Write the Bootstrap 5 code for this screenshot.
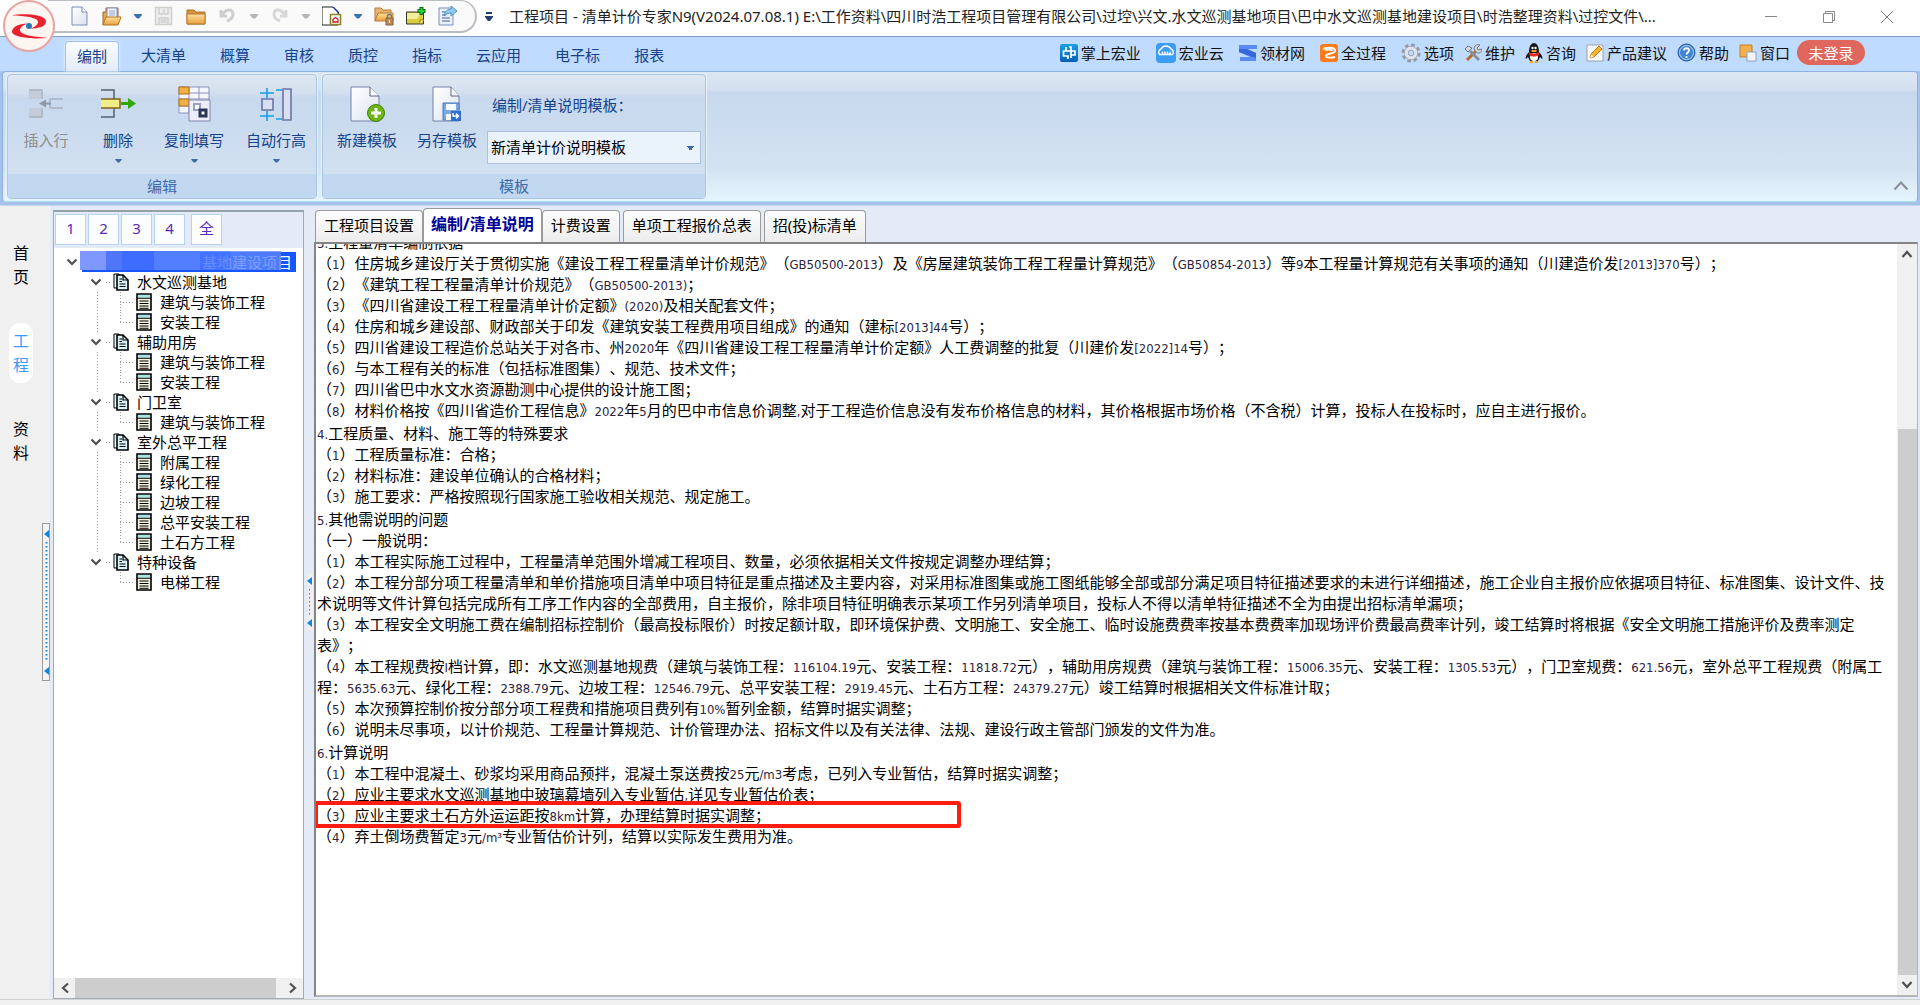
<!DOCTYPE html>
<html lang="zh-CN">
<head>
<meta charset="utf-8">
<meta name="viewport" content="width=device-width, initial-scale=1">
<title>工程项目 - 清单计价专家N9</title>
<link href="https://cdn.jsdelivr.net/npm/bootstrap@5.3.0/dist/css/bootstrap.min.css" rel="stylesheet">
<style>
body{font-family:"Noto Sans","Noto Sans CJK SC",sans-serif;font-size:15px;line-height:20px;color:#000;background:#f0f0f0}
button{font:inherit;color:inherit;border:0;background:none;padding:0}
a{color:inherit;text-decoration:none}
svg{display:block;flex:none}
.titlebar{height:36px;background:#fff}
.logo-btn{width:54px;height:54px;left:2px;top:-1px;z-index:5}
.qat{height:33px;margin-left:48px;padding-left:22px;padding-right:17px;gap:12px;background:#fafafa;border:1px solid #b9bcc0;border-width:1px 2px 2px 0;border-radius:0 17px 17px 0}
.cap-text{color:#222;margin-left:16px;padding-top:6px}
.win-btn{width:58px;height:34px}
.tabstrip{background:#bfdbff;border-top:1px solid #7f9dc9;height:35px;color:#15428b;padding-left:60px;padding-right:55px}
.rtab{height:30px;padding:0 12px 2px;margin:0 5px;border-radius:4px 4px 0 0}
.rtab.on{background:linear-gradient(#fbfdff,#e3ecf8);border:1px solid #9fc0ec;border-bottom:0;padding:0 11px 2px;box-shadow:0 0 3px #fff}
.quick{color:#111;gap:15px;padding-top:3px}
.quick a{gap:3px}
.tools{gap:10px}
.login{width:68px;height:25px;border-radius:13px;background:#e0675d;color:#fff;margin-left:-3px}
.ribbon{height:131px;padding:2px 4px;margin:0 2px 0 2px;border:1px solid #8db2e3;border-radius:4px;background:linear-gradient(#dde7f3 0,#d4e0f0 14%,#c8d8ed 16%,#d3e3f2 75%,#e5f5ff 100%);color:#15428b;gap:5px;border-bottom-color:#a9e2ef}
.ribbon-wrap{background:#a6c2ea;padding-bottom:3px;border-bottom:1px solid #c5d8f2}
.rgroup{border:1px solid #a8c6e2;border-radius:4px;background:linear-gradient(#dfe8f3 0,#d3dfee 15%,#c8d8ee 19%,#d4e4f2 100%);box-shadow:0 0 0 1px #e8f2fb}
.rgroup .cap{height:24px;background:#c2d8f0;color:#3e6aaa}
.rbtn{padding-top:11px}
.rbtn .lbl{margin-top:8px}
.rbtn .tri{margin-top:9px}
.off{color:#8d8d8d}
.w1{width:76px}.w2{width:68px}.w3{width:84px}.w4{width:80px}
.combo{height:33px;border:1px solid #abc1de;border-radius:0;background-color:#eaf2fb;color:#000;font-size:15px;line-height:20px;padding:0 24px 2px 3px;width:214px;background-image:linear-gradient(#3e6aaa,#3e6aaa),linear-gradient(#3e6aaa,#3e6aaa),linear-gradient(#3e6aaa,#3e6aaa);background-size:7px 1px,5px 1px,3px 2px;background-position:right 6px top 14px,right 7px top 15px,right 8px top 16px;background-repeat:no-repeat}
.combo-label{padding-left:5px}
.rail{width:50px;padding-top:29px;gap:28px}
.rail a{width:24px;margin-left:9px;padding:6px 4px;font-size:16px;line-height:24px;border-radius:11px;text-align:center}
.rail a.on{background:#fff;color:#3b9bff}
.main{background:#e4ebf6}
.rail-col{background:#f0f0f0}
.gripper{width:8px;height:158px;border:1px solid #9a9a9a;background:#f4f4f4;top:317px;right:0}
.panel-tree{width:251px;margin:4px 0 0 3px;border:1px solid #a0abb4;border-top:2px solid #93a2a6;background:#fff}
.lvbar{background:#e4ebf6;height:36px;padding:2px 1px;gap:2px}
.lvbar button{width:31px;height:31px;border:1px solid #b5d3f5;background:#fbfdff;color:#5a28b4;padding-bottom:3px}
.tree,.tree ul{list-style:none;margin:0;padding:0}
.tree{padding:4px 0 0 12px}
.trow{height:20px;white-space:nowrap}
.rootbar{width:214px;height:20px;background:#1655ff;color:#fff;margin-left:4px}
.veil{left:-2px;top:-1px;width:201px;height:19px;background:linear-gradient(90deg,#7f98ff 0 26px,#5076f8 26px 42px,#3d6cff 42px 74px,#527fff 74px 120px,rgba(74,120,255,.85) 120px 150px,rgba(91,133,255,.8) 150px 201px)}
.leafs{margin-left:31px!important;padding-left:23px!important;background:repeating-linear-gradient(#9a9a9a 0 1px,#fff 1px 3px) left top/1px 100% no-repeat}
.leafs.end{background:none}
.elbow{width:14px;height:20px;margin-right:2px;background:repeating-linear-gradient(#9a9a9a 0 1px,transparent 1px 3px) left top/1px 100% no-repeat,repeating-linear-gradient(90deg,#9a9a9a 0 1px,transparent 1px 3px) left 10px/14px 1px no-repeat}
li:last-child>.trow>.elbow{background-size:1px 10px,14px 1px}
.stub{width:5px;height:1px;margin:0 2px 0 4px;background:repeating-linear-gradient(90deg,#9a9a9a 0 1px,transparent 1px 3px)}
.hbar{height:20px;background:#f0f0f0}
.hbar .thumb{background:#cdcdcd;margin-right:6px}
.arr{width:21px;height:20px}
.split{width:10px;padding-top:368px}
.dtabs{padding:4px 0 0 1px}
.dtabs button{height:32px;padding:0 8px 3px;border:1px solid #9b9b9b;border-bottom:0;border-radius:4px 4px 0 0;background:linear-gradient(#fdfdfd,#ececec);white-space:nowrap}
.dtabs button.on{height:34px;margin-top:-2px;background:#fff;color:#000096;font-weight:700;font-size:16px;padding:0 7px 4px}
.dtabs .gap-l{margin-left:3px}
.doc{border:2px solid #848484;border-right:1px solid #b5b5b5;border-bottom:2px solid #b5b5b5;background:#fff;margin-right:2px;margin-bottom:2px}
.paper{padding-left:1px;line-height:21px;font-family:"Noto Sans CJK SC",sans-serif;white-space:nowrap;text-spacing-trim:space-all}
.paper section{padding-bottom:2px}
.paper section:first-child{margin-top:-13px}
.paper p{margin:0}
.paper i{font:normal 13px/13px "DejaVu Sans Condensed","DejaVu Sans",sans-serif;font-stretch:condensed;color:#2c2440}
.frame-red{left:-3px;top:-3px;width:647px;height:27px;border:4px solid #ff1c10;border-radius:3px}
.vbar{width:20px;background:#f0f0f0}
.vbar .thumb{background:#cdcdcd;width:19px;flex:545}
.vbar .room{flex:165}
.foot{height:6px;border-top:1px solid #d2d2d2;background:#f0f0f0}
</style>
<script src="https://cdn.jsdelivr.net/npm/bootstrap@5.3.0/dist/js/bootstrap.bundle.min.js"></script>
</head>
<body class="d-flex flex-column vh-100 overflow-hidden">
<svg width="0" height="0" class="position-absolute" aria-hidden="true">
<defs>
<linearGradient id="gf" x1="0" y1="0" x2="0" y2="1"><stop offset="0" stop-color="#fde0a0"/><stop offset="1" stop-color="#e9a13c"/></linearGradient>
<linearGradient id="gd" x1="0" y1="0" x2="1" y2="1"><stop offset="0" stop-color="#fff"/><stop offset="1" stop-color="#dbe2ee"/></linearGradient>
<linearGradient id="gb" x1="0" y1="0" x2="0" y2="1"><stop offset="0" stop-color="#1aa0ea"/><stop offset="1" stop-color="#0560b8"/></linearGradient>
<symbol id="doc2" viewBox="0 0 16 18"><path d="M1 1h5v14H1z" fill="#dff" stroke="#000"/><path d="M4 2h6l5 5v10H4z" fill="#d8f3f8" stroke="#000" stroke-width="1.6"/><path d="M10 2v5h5M6.500 6h2.500M6.500 8.500h2.500M6.500 11h6M6.500 13.500h6" fill="none" stroke="#000" stroke-width="1.200"/></symbol>
<symbol id="sheet" viewBox="0 0 16 18"><path d="M1 1h14v16H1z" fill="#f4f3dc" stroke="#000" stroke-width="1.600"/><path d="M2 2h12v2.500H2z" fill="#a8e4f0"/><path d="M1 5.300h14M3.500 8h9M3.500 10.500h9M3.500 13h9M3.500 15.200h9" stroke="#000" stroke-width="1.100"/></symbol>
<symbol id="chev" viewBox="0 0 12 12"><path d="M1.500 3.500 6 8l4.500-4.500" fill="none" stroke="#505050" stroke-width="2.200"/></symbol>
<symbol id="tri" viewBox="0 0 8 5"><path d="M0 0h8v1L5 4.500H3L0 1z"/></symbol>
</defs></svg>

<header>
<div class="titlebar d-flex align-items-start position-relative">
  <button class="logo-btn position-absolute" aria-label="主菜单"><svg width="54" height="54" viewBox="0 0 54 54"><circle cx="27" cy="27" r="25" fill="#fff5f0" stroke="#e4a5a5" stroke-width="2"/><path d="M10 16.500c6-2 33-2 34 5.500 0 6-7 7-17 8 5-1.500 9-4 9-7 0-5-14-6-26-6.500z" fill="#e8232f"/><path d="M45 38.500c-6 2-34 1-35-5.500 0-5 6-8 16-8.500-5 1.500-8 4-8 6.500 0 5 14 7 27 7.500z" fill="#e8232f"/><circle cx="27" cy="27" r="3" fill="#2b78b8"/></svg></button>
  <div class="qat d-flex align-items-center" role="toolbar">
    <button aria-label="新建"><svg width="20" height="20" viewBox="0 0 20 20"><path d="M2 1h10l5 5v13H2z" fill="url(#gd)" stroke="#7d8fb3"/><path d="M12 1v5h5" fill="#fff" stroke="#7d8fb3"/></svg></button>
    <button aria-label="打开"><svg width="20" height="20" viewBox="0 0 20 20"><path d="M1 19V6h3V2h12v9" fill="#eba848" stroke="#9a6a28"/><path d="M5 2h10v11H5z" fill="#f2f6fd" stroke="#7d8fc0"/><path d="M7 5h6M7 7h6M7 9h6" stroke="#8ea4d8"/><path d="M1 19 4 11h15l-3 8z" fill="url(#gf)" stroke="#b3741e"/></svg></button>
    <button aria-label="打开列表"><svg width="8" height="5" fill="#3c70b4"><use href="#tri"/></svg></button>
    <button aria-label="保存" disabled><svg width="20" height="20" viewBox="0 0 20 20" fill="none" stroke="#cfcfcf" stroke-width="1.500"><path d="M1.500 1.500h16v17h-16z" fill="#eee"/><path d="M5 2v6h9V2M5 18v-6h9v6M10 3v4M6.500 14h6M6.500 16h6"/></svg></button>
    <button aria-label="文件夹"><svg width="20" height="20" viewBox="0 0 20 20"><path d="M1 4h7l2 2h9v12H1z" fill="#d9933a" stroke="#a8702c"/><path d="M1 8h18v10H1z" fill="url(#gf)" stroke="#b07a35"/></svg></button>
    <button aria-label="撤销" disabled><svg width="20" height="20" viewBox="0 0 20 20"><path d="M3 4v6h6M4 9.500C7 3 15 2 15 8c0 4-3 6-6 7" fill="none" stroke="#cfcfcf" stroke-width="3"/></svg></button>
    <button aria-label="撤销列表" disabled><svg width="8" height="5" fill="#b5b5b5"><use href="#tri"/></svg></button>
    <button aria-label="重做" disabled><svg width="20" height="20" viewBox="0 0 20 20"><path d="M16 4v6h-6M15 9.500C12 3 4 2 4 8c0 4 3 6 6 7" fill="none" stroke="#d8d8d8" stroke-width="3"/></svg></button>
    <button aria-label="重做列表" disabled><svg width="8" height="5" fill="#b5b5b5"><use href="#tri"/></svg></button>
    <button aria-label="报告"><svg width="20" height="20" viewBox="0 0 20 20"><path d="M0 19V1h11l5 5v13z" fill="#fff" stroke="#222"/><path d="M10 1l7 7V6l-5-5z" fill="#1a2c9c"/><path d="M8.500 8.500h10v10h-10z" fill="#fff" stroke="#8c8424" stroke-width="1.600"/><path d="M11 16h5v-2.500l-2.500-2-2.500 2z" fill="none" stroke="#c42020" stroke-width="1.300"/></svg></button>
    <button aria-label="报告列表"><svg width="8" height="5" fill="#3c70b4"><use href="#tri"/></svg></button>
    <button aria-label="加密文件"><svg width="20" height="20" viewBox="0 0 20 20"><path d="M1 15V2h6l2 2h8v3" fill="#e9b56c" stroke="#b67b39"/><path d="M1 15 4 7h15v8z" fill="url(#gf)" stroke="#b67b39"/><path d="M12 12h7v7h-7z" fill="#b98b58" stroke="#876038"/><path d="M13.500 12v-2c0-2 4-2 4 0v2" fill="none" stroke="#777" stroke-width="1.400"/><path d="M15.500 14v3" stroke="#fff"/></svg></button>
    <button aria-label="添加便笺"><svg width="20" height="20" viewBox="0 0 20 20"><path d="M.500 6h17v12H.500z" fill="#d8cf3c" stroke="#333"/><path d="M1 7h14l-4 6H1z" fill="#f2ee9a"/><path d="M14 18v-4h4" fill="#f7f2b0" stroke="#a07a00"/><path d="M15.500 1v8M11.500 5h8" stroke="#0a6a10" stroke-width="4"/><path d="M15.500 2v6M12.500 5h6" stroke="#2fd03a" stroke-width="2"/></svg></button>
    <button aria-label="导出"><svg width="20" height="20" viewBox="0 0 20 20"><path d="M1 2h14v17H1z" fill="#eaf0fb" stroke="#7b8fc2"/><path d="M4 6h5M4 9h4M4 12h8M4 15h8" stroke="#7b8fc2" stroke-width="1.400"/><path d="M6 10c1-5 4-7 7-7V0l6 5-6 5V7c-3 0-5 1-7 3z" fill="#8dcbf2" stroke="#4d93cc"/></svg></button>
  </div>
  <button class="ms-2 mt-2 pt-1" aria-label="自定义工具栏"><svg width="8" height="10" viewBox="0 0 8 10" fill="#243f77"><path d="M1 0h6v2H1zM0 4h8v1L5 9H3L0 5z"/></svg></button>
  <div class="cap-text text-nowrap">工程项目 - 清单计价专家N9(V2024.07.08.1) E:\工作资料\四川时浩工程项目管理有限公司\过埪\兴文.水文巡测基地项目\巴中水文巡测基地建设项目\时浩整理资料\过控文件\...</div>
  <div class="ms-auto me-1 d-flex">
    <button class="win-btn d-flex align-items-center justify-content-center" aria-label="最小化"><svg width="14" height="14"><path d="M1 6.500h12" stroke="#888"/></svg></button>
    <button class="win-btn d-flex align-items-center justify-content-center" aria-label="还原"><svg width="14" height="14" fill="none" stroke="#888"><path d="M1.500 3.500h9v9h-9zM3.500 3.500v-2h9v9h-2"/></svg></button>
    <button class="win-btn d-flex align-items-center justify-content-center" aria-label="关闭"><svg width="14" height="14" stroke="#777"><path d="m1 1 12 12M13 1 1 13"/></svg></button>
  </div>
</div>
<div class="tabstrip d-flex align-items-end">
  <nav class="d-flex">
    <a href="#" class="rtab on d-flex align-items-center">编制</a><a href="#" class="rtab d-flex align-items-center">大清单</a><a href="#" class="rtab d-flex align-items-center">概算</a><a href="#" class="rtab d-flex align-items-center">审核</a><a href="#" class="rtab d-flex align-items-center">质控</a><a href="#" class="rtab d-flex align-items-center">指标</a><a href="#" class="rtab d-flex align-items-center">云应用</a><a href="#" class="rtab d-flex align-items-center">电子标</a><a href="#" class="rtab d-flex align-items-center">报表</a>
  </nav>
  <div class="quick ms-auto d-flex align-items-center align-self-start text-nowrap">
    <a href="#" class="d-flex align-items-center"><svg width="18" height="18" viewBox="0 0 18 18"><rect width="18" height="18" rx="2" fill="url(#gb)"/><path d="M6 3v4h5v7M6 7H3.500v5H8v3M9 3h2v4h4v4h-4" fill="none" stroke="#fff" stroke-width="1.700"/></svg>掌上宏业</a>
    <a href="#" class="d-flex align-items-center"><svg width="20" height="20" viewBox="0 0 20 20"><rect width="20" height="20" rx="4" fill="#3a9cf5"/><path d="M3.500 11.500a3.500 3.500 0 0 1 1.500-5.500c2-4 8-4 10 0a3.500 3.500 0 0 1 1.500 5.500M3 11.500h14M6.500 8.500v3M9 8.500v3M11.500 8.500v3M14 8.500v3" fill="none" stroke="#fff" stroke-width="1.400"/></svg>宏业云</a>
    <a href="#" class="d-flex align-items-center"><svg width="18" height="18" viewBox="0 0 18 18"><path d="M0 1h18v4H8l9 4v8H1v-4h10L0 8z" fill="#5b8cf5"/><path d="M0 5l8 0 9 4v5l-6-2L0 8z" fill="#3866dc"/></svg>领材网</a>
    <a href="#" class="d-flex align-items-center"><svg width="18" height="18" viewBox="0 0 18 18"><rect width="18" height="18" rx="3" fill="#ff7b1a"/><path d="M3 5c5-2 12-2 12 2 0 3-9 2-9 5 0 2 5 2 9 1M5 6c5-1 7 0 7 1" fill="none" stroke="#fff" stroke-width="1.900"/></svg>全过程</a>
    <div class="tools d-flex align-items-center">
    <a href="#" class="d-flex align-items-center"><svg width="20" height="20" viewBox="0 0 20 20"><circle cx="10" cy="10" r="8" fill="none" stroke="#8f98a6" stroke-width="3" stroke-dasharray="3.500 2.780"/><circle cx="10" cy="10" r="6.800" fill="#dfe4ec" stroke="#a2aab8"/><circle cx="10" cy="10" r="2.800" fill="#bfdbff" stroke="#9aa2b0"/></svg>选项</a>
    <a href="#" class="d-flex align-items-center"><svg width="18" height="18" viewBox="0 0 18 18"><path d="m3 16 9-9" stroke="#b46b2a" stroke-width="3"/><path d="m15 16-9-9" stroke="#888f9a" stroke-width="3"/><path d="M1 5l3-3 4 2-4 4zM10 5c0-4 4-5 6-4l-3 3 1 2 4-1c0 4-4 5-6 3z" fill="#d5d9df" stroke="#72777f"/></svg>维护</a>
    <a href="#" class="d-flex align-items-center"><svg width="18" height="20" viewBox="0 0 18 20"><path d="M4 9c0-12 10-12 10 0 3 3 4 6 3 7l-2-2-2 4H5l-2-4-2 2c-1-1 0-4 3-7z" fill="#181818"/><ellipse cx="9" cy="14" rx="4" ry="4" fill="#fff"/><path d="M4 9c3 2 7 2 10 0v3c-3 2-7 2-10 0z" fill="#e02a24"/><path d="M5 19h3M10 19h3M6.500 8h5" stroke="#f0a020" stroke-width="2"/><circle cx="7.500" cy="5" r="1.200" fill="#fff"/><circle cx="10.500" cy="5" r="1.200" fill="#fff"/></svg>咨询</a>
    <a href="#" class="d-flex align-items-center"><svg width="18" height="18" viewBox="0 0 18 18"><path d="M1 1h16v16H1z" fill="#fafbfd" stroke="#9aa0aa"/><path d="M4 14l1-4 8-8 3 3-8 8z" fill="#f6b434" stroke="#b87a10"/><path d="m4 14 1-4 3 3z" fill="#f7e1bb"/></svg>产品建议</a>
    <a href="#" class="d-flex align-items-center"><svg width="19" height="19" viewBox="0 0 19 19"><circle cx="9.500" cy="9.500" r="8.500" fill="#3e86d2" stroke="#1f579c"/><circle cx="9.500" cy="9.500" r="7" fill="none" stroke="#b9d6f2"/><path d="M7 7.500c0-3 5-3 5 0 0 2-2.500 2-2.500 4M9.500 13v2" fill="none" stroke="#fff" stroke-width="1.800"/></svg>帮助</a>
    <a href="#" class="d-flex align-items-center"><svg width="18" height="18" viewBox="0 0 18 18"><path d="M1 1h12v12H1z" fill="#f2b04a" stroke="#c47f22"/><path d="M8 8h9v9H8z" fill="#f1f5fb" stroke="#8fa3bf"/></svg>窗口</a>
    <button class="login">未登录</button>
    </div>
  </div>
</div>
<div class="ribbon-wrap">
<div class="ribbon d-flex">
  <div class="rgroup d-flex flex-column">
    <div class="d-flex flex-grow-1 align-items-start">
      <button class="rbtn off w1 d-flex flex-column align-items-center" disabled><svg width="36" height="36" viewBox="0 0 36 36"><path d="M1 4h12v9H1zM1 22h12v9H1z" fill="#c3ccd8"/><path d="M1 4h13v9M1 31h13v-9M22 13h13M22 22h13M22 13v9" fill="none" stroke="#a9b2be" stroke-width="1.500"/><path d="m11 17.500 7-4v3h5v2h-5v3z" fill="#8e98a6"/></svg><span class="lbl">插入行</span></button>
      <button class="rbtn w2 d-flex flex-column align-items-center"><svg width="36" height="36" viewBox="0 0 36 36"><path d="M1 4h13v9M1 31h13v-9" fill="none" stroke="#55606e" stroke-width="1.500"/><path d="M1 13h19v9H1" fill="#f0ee86" stroke="#84601c" stroke-width="1.500"/><path d="M21 16h7v-4l8 5.500-8 5.500v-4h-7z" fill="#2fa80c"/></svg><span class="lbl">删除</span><svg class="tri" width="7" height="4" fill="#3e6aaa" viewBox="0 0 8 5"><path d="M0 0h8v1L5 4.500H3L0 1z"/></svg></button>
      <button class="rbtn w3 d-flex flex-column align-items-center"><svg width="36" height="36" viewBox="0 0 36 36"><path d="M3 1h30v26H3z" fill="#f4f6fb" stroke="#8c93b8"/><path d="M3 7h30M3 13h30M3 20h30M13 1v26M23 1v26" stroke="#8c93b8"/><path d="M3 1h10v7H3zM3 13h10v7H3z" fill="#f0b044" stroke="#b36e18"/><path d="M13 14h21v21H13z" fill="#eceffa" stroke="#7d85ad"/><path d="M18 18h6v6h-6z" fill="#fff" stroke="#9aa0c4" stroke-width="2"/><path d="M24 24h6v6h-6z" fill="#fff" stroke="#2b3450" stroke-width="3"/></svg><span class="lbl">复制填写</span><svg class="tri" width="7" height="4" fill="#3e6aaa" viewBox="0 0 8 5"><path d="M0 0h8v1L5 4.500H3L0 1z"/></svg></button>
      <button class="rbtn w4 d-flex flex-column align-items-center"><svg width="36" height="36" viewBox="0 0 36 36" fill="none"><path d="M2 7h14M9 2v10M2 30h14M9 25v10M18 4h6M18 33h6" stroke="#15a0e4" stroke-width="1.600"/><path d="M4 13h11v11H4zM25 3h8v31h-8z" fill="#d8dff0" stroke="#6a76a6" stroke-width="1.600"/></svg><span class="lbl">自动行高</span><svg class="tri" width="7" height="4" fill="#3e6aaa" viewBox="0 0 8 5"><path d="M0 0h8v1L5 4.500H3L0 1z"/></svg></button>
    </div>
    <div class="cap d-flex align-items-center justify-content-center">编辑</div>
  </div>
  <div class="rgroup d-flex flex-column">
    <div class="d-flex flex-grow-1 align-items-start px-1">
      <button class="rbtn w4 d-flex flex-column align-items-center"><svg width="36" height="36" viewBox="0 0 36 36"><path d="M2 1h19l9 9v25H2z" fill="url(#gd)" stroke="#7582a8"/><path d="M21 1v9h9" fill="#fff" stroke="#55618a"/><circle cx="27" cy="27" r="8.500" fill="#6cb512" stroke="#3f8408"/><path d="M27 22v10M22 27h10" stroke="#fff" stroke-width="3"/></svg><span class="lbl">新建模板</span></button>
      <button class="rbtn w4 d-flex flex-column align-items-center"><svg width="36" height="36" viewBox="0 0 36 36"><path d="M4 1h18l8 9v25H4z" fill="url(#gd)" stroke="#7582a8"/><path d="M22 1v9h8" fill="#fff" stroke="#55618a"/><path d="M14 17h16v17H14z" fill="#7aa8e4" stroke="#4a78be"/><path d="M17 18h10v6H17zM17 28h6v6h-6z" fill="#f4f8ff"/><path d="M22 25h10v10H22z" fill="#2f6fd0"/><path d="M24 27v3h5m-2-2.500 2.500 2.500-2.500 2.500" fill="none" stroke="#fff" stroke-width="1.500"/></svg><span class="lbl">另存模板</span></button>
      <div class="pt-3">
        <label for="tpl" class="combo-label d-block mt-1 mb-3">编制/清单说明模板：</label>
        <select id="tpl" class="form-select combo"><option>新清单计价说明模板</option></select>
      </div>
    </div>
    <div class="cap d-flex align-items-center justify-content-center">模板</div>
  </div>
  <button class="ms-auto align-self-end mb-2 me-1" aria-label="折叠功能区"><svg width="16" height="10" viewBox="0 0 16 10"><path d="m1.500 8.500 6.500-7 6.500 7" fill="none" stroke="#8a8f96" stroke-width="2"/></svg></button>
</div>
</div>
</header>

<main class="main d-flex flex-grow-1 overflow-hidden">
  <div class="rail-col position-relative">
    <nav class="rail d-flex flex-column">
      <a href="#">首页</a><a href="#" class="on">工程</a><a href="#">资料</a>
    </nav>
    <div class="gripper position-absolute"><svg width="6" height="156" viewBox="0 0 6 156"><path d="M6 6v8l-5-4zM6 143v8l-5-4z" fill="#1583d8"/><path d="M3.500 18v118" stroke="#1583d8" stroke-width="2" stroke-dasharray="1.500 2.500"/></svg></div>
  </div>
  <aside class="panel-tree d-flex flex-column flex-shrink-0">
    <div class="lvbar d-flex"><button>1</button><button>2</button><button>3</button><button>4</button><button class="ms-1">全</button></div>
    <ul class="tree flex-grow-1">
      <li><div class="trow d-flex align-items-center"><svg width="12" height="12"><use href="#chev"/></svg><div class="rootbar position-relative d-flex justify-content-end pe-1">基地建设项目<div class="veil position-absolute"></div></div></div>
      <ul>
        <li><div class="trow d-flex align-items-center ps-4"><svg width="12" height="12"><use href="#chev"/></svg><span class="stub"></span><svg width="16" height="18"><use href="#doc2"/></svg><span class="ps-2">水文巡测基地</span></div>
          <ul class="leafs"><li><div class="trow d-flex align-items-center"><span class="elbow"></span><svg width="16" height="18"><use href="#sheet"/></svg><span class="ps-2">建筑与装饰工程</span></div></li><li><div class="trow d-flex align-items-center"><span class="elbow"></span><svg width="16" height="18"><use href="#sheet"/></svg><span class="ps-2">安装工程</span></div></li></ul></li>
        <li><div class="trow d-flex align-items-center ps-4"><svg width="12" height="12"><use href="#chev"/></svg><span class="stub"></span><svg width="16" height="18"><use href="#doc2"/></svg><span class="ps-2">辅助用房</span></div>
          <ul class="leafs"><li><div class="trow d-flex align-items-center"><span class="elbow"></span><svg width="16" height="18"><use href="#sheet"/></svg><span class="ps-2">建筑与装饰工程</span></div></li><li><div class="trow d-flex align-items-center"><span class="elbow"></span><svg width="16" height="18"><use href="#sheet"/></svg><span class="ps-2">安装工程</span></div></li></ul></li>
        <li><div class="trow d-flex align-items-center ps-4"><svg width="12" height="12"><use href="#chev"/></svg><span class="stub"></span><svg width="16" height="18"><use href="#doc2"/></svg><span class="ps-2">门卫室</span></div>
          <ul class="leafs"><li><div class="trow d-flex align-items-center"><span class="elbow"></span><svg width="16" height="18"><use href="#sheet"/></svg><span class="ps-2">建筑与装饰工程</span></div></li></ul></li>
        <li><div class="trow d-flex align-items-center ps-4"><svg width="12" height="12"><use href="#chev"/></svg><span class="stub"></span><svg width="16" height="18"><use href="#doc2"/></svg><span class="ps-2">室外总平工程</span></div>
          <ul class="leafs"><li><div class="trow d-flex align-items-center"><span class="elbow"></span><svg width="16" height="18"><use href="#sheet"/></svg><span class="ps-2">附属工程</span></div></li><li><div class="trow d-flex align-items-center"><span class="elbow"></span><svg width="16" height="18"><use href="#sheet"/></svg><span class="ps-2">绿化工程</span></div></li><li><div class="trow d-flex align-items-center"><span class="elbow"></span><svg width="16" height="18"><use href="#sheet"/></svg><span class="ps-2">边坡工程</span></div></li><li><div class="trow d-flex align-items-center"><span class="elbow"></span><svg width="16" height="18"><use href="#sheet"/></svg><span class="ps-2">总平安装工程</span></div></li><li><div class="trow d-flex align-items-center"><span class="elbow"></span><svg width="16" height="18"><use href="#sheet"/></svg><span class="ps-2">土石方工程</span></div></li></ul></li>
        <li><div class="trow d-flex align-items-center ps-4"><svg width="12" height="12"><use href="#chev"/></svg><span class="stub"></span><svg width="16" height="18"><use href="#doc2"/></svg><span class="ps-2">特种设备</span></div>
          <ul class="leafs end"><li><div class="trow d-flex align-items-center"><span class="elbow"></span><svg width="16" height="18"><use href="#sheet"/></svg><span class="ps-2">电梯工程</span></div></li></ul></li>
      </ul></li>
    </ul>
    <div class="hbar d-flex">
      <button class="arr d-flex align-items-center justify-content-center" aria-label="向左"><svg width="10" height="12" fill="none" stroke="#505050" stroke-width="2.200"><path d="M8 1.500 3 6l5 4.500"/></svg></button>
      <div class="thumb flex-grow-1"></div>
      <button class="arr d-flex align-items-center justify-content-center" aria-label="向右"><svg width="10" height="12" fill="none" stroke="#505050" stroke-width="2.200"><path d="M2 1.500 7 6l-5 4.500"/></svg></button>
    </div>
  </aside>
  <div class="split flex-shrink-0"><svg width="10" height="56" viewBox="0 0 10 56"><path d="M4 0h5v56H4z" fill="#f0f0f0"/><path d="M8 3v8L3 7zM8 45v8l-5-4z" fill="#1583d8"/><path d="M5.500 15v26" stroke="#1583d8" stroke-dasharray="1.500 2.500"/></svg></div>
  <section class="d-flex flex-column flex-grow-1 overflow-hidden">
    <div class="dtabs d-flex">
      <button>工程项目设置</button><button class="on">编制/清单说明</button><button>计费设置</button><button class="gap-l">单项工程报价总表</button><button class="gap-l">招(投)标清单</button>
    </div>
    <div class="doc d-flex flex-grow-1 overflow-hidden">
      <article class="paper flex-grow-1 overflow-hidden">
        <section>
        <p><i>3.</i>工程量清单编制依据</p>
        <p>（<i>1</i>）住房城乡建设厅关于贯彻实施《建设工程工程量清单计价规范》（<i>GB50500-2013</i>）及《房屋建筑装饰工程工程量计算规范》（<i>GB50854-2013</i>）等<i>9</i>本工程量计算规范有关事项的通知（川建造价发<i>[2013]370</i>号）；</p>
        <p>（<i>2</i>）《建筑工程工程量清单计价规范》（<i>GB50500-2013)</i>；</p>
        <p>（<i>3</i>）《四川省建设工程工程量清单计价定额》<i>(2020)</i>及相关配套文件；</p>
        <p>（<i>4</i>）住房和城乡建设部、财政部关于印发《建筑安装工程费用项目组成》的通知（建标<i>[2013]44</i>号）；</p>
        <p>（<i>5</i>）四川省建设工程造价总站关于对各市、州<i>2020</i>年《四川省建设工程工程量清单计价定额》人工费调整的批复（川建价发<i>[2022]14</i>号）；</p>
        <p>（<i>6</i>）与本工程有关的标准（包括标准图集）、规范、技术文件；</p>
        <p>（<i>7</i>）四川省巴中水文水资源勘测中心提供的设计施工图；</p>
        <p>（<i>8</i>）材料价格按《四川省造价工程信息》<i>2022</i>年<i>5</i>月的巴中市信息价调整<i>,</i>对于工程造价信息没有发布价格信息的材料，其价格根据市场价格（不含税）计算，投标人在投标时，应自主进行报价。</p>
        </section>
        <section>
        <p><i>4.</i>工程质量、材料、施工等的特殊要求</p>
        <p>（<i>1</i>）工程质量标准：合格；</p>
        <p>（<i>2</i>）材料标准：建设单位确认的合格材料；</p>
        <p>（<i>3</i>）施工要求：严格按照现行国家施工验收相关规范、规定施工。</p>
        </section>
        <section>
        <p><i>5.</i>其他需说明的问题</p>
        <p>（一）一般说明：</p>
        <p>（<i>1</i>）本工程实际施工过程中，工程量清单范围外增减工程项目、数量，必须依据相关文件按规定调整办理结算；</p>
        <p>（<i>2</i>）本工程分部分项工程量清单和单价措施项目清单中项目特征是重点描述及主要内容，对采用标准图集或施工图纸能够全部或部分满足项目特征描述要求的未进行详细描述，施工企业自主报价应依据项目特征、标准图集、设计文件、技<br>术说明等文件计算包括完成所有工序工作内容的全部费用，自主报价，除非项目特征明确表示某项工作另列清单项目，投标人不得以清单特征描述不全为由提出招标清单漏项；</p>
        <p>（<i>3</i>）本工程安全文明施工费在编制招标控制价（最高投标限价）时按足额计取，即环境保护费、文明施工、安全施工、临时设施费费率按基本费费率加现场评价费最高费率计列，竣工结算时将根据《安全文明施工措施评价及费率测定<br>表》；</p>
        <p>（<i>4</i>）本工程规费按<i>I</i>档计算，即：水文巡测基地规费（建筑与装饰工程：<i>116104.19</i>元、安装工程：<i>11818.72</i>元），辅助用房规费（建筑与装饰工程：<i>15006.35</i>元、安装工程：<i>1305.53</i>元），门卫室规费：<i>621.56</i>元，室外总平工程规费（附属工<br>程：<i>5635.63</i>元、绿化工程：<i>2388.79</i>元、边坡工程：<i>12546.79</i>元、总平安装工程：<i>2919.45</i>元、土石方工程：<i>24379.27</i>元）竣工结算时根据相关文件标准计取；</p>
        <p>（<i>5</i>）本次预算控制价按分部分项工程费和措施项目费列有<i>10%</i>暂列金额，结算时据实调整；</p>
        <p>（<i>6</i>）说明未尽事项，以计价规范、工程量计算规范、计价管理办法、招标文件以及有关法律、法规、建设行政主管部门颁发的文件为准。</p>
        </section>
        <section>
        <p><i>6.</i>计算说明</p>
        <p>（<i>1</i>）本工程中混凝土、砂浆均采用商品预拌，混凝土泵送费按<i>25</i>元<i>/m3</i>考虑，已列入专业暂估，结算时据实调整；</p>
        <p>（<i>2</i>）应业主要求水文巡测基地中玻璃幕墙列入专业暂估<i>,</i>详见专业暂估价表；</p>
        <p class="position-relative">（<i>3</i>）应业主要求土石方外运运距按<i>8km</i>计算，办理结算时据实调整；<span class="frame-red position-absolute"></span></p>
        <p>（<i>4</i>）弃土倒场费暂定<i>3</i>元<i>/m³</i>专业暂估价计列，结算以实际发生费用为准。</p>
        </section>
      </article>
      <div class="vbar d-flex flex-column align-items-center flex-shrink-0">
        <button class="arr d-flex align-items-center justify-content-center" aria-label="向上"><svg width="12" height="10" fill="none" stroke="#505050" stroke-width="2.200"><path d="M1.500 8 6 3l4.500 5"/></svg></button>
        <div class="room"></div><div class="thumb"></div>
        <button class="arr d-flex align-items-center justify-content-center" aria-label="向下"><svg width="12" height="10" fill="none" stroke="#505050" stroke-width="2.200"><path d="M1.500 2 6 7l4.500-5"/></svg></button>
      </div>
    </div>
  </section>
</main>
<footer class="foot flex-shrink-0"></footer>
</body>
</html>
